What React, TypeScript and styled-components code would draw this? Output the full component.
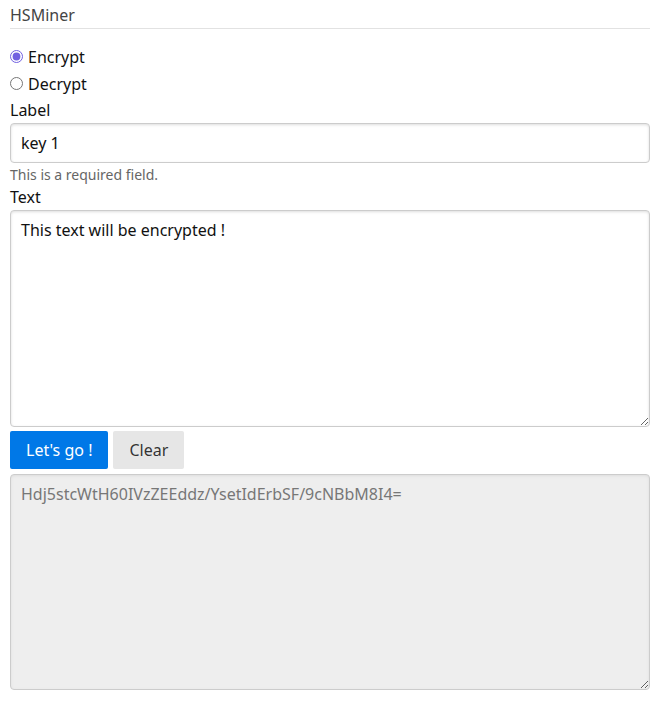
import React, { useState } from "react";
import styled, { createGlobalStyle } from "styled-components";

const Global = createGlobalStyle`
  html, body { margin: 0; padding: 0; background: #fff; }
  body { font-family: "Noto Sans", "Open Sans", sans-serif; font-size: 16px; color: #222; }
  * { box-sizing: border-box; }
`;

const Page = styled.div`
  padding: 0 13px 0 10px;
  display: flex;
  flex-direction: column;
`;

const Header = styled.header`
  padding: 4px 0 2px;
  line-height: 22px;
  color: #444;
  border-bottom: 1px solid #e2e2e2;
`;

const Form = styled.form`
  display: flex;
  flex-direction: column;
  margin-top: 14px;
`;

const RadioGroup = styled.div`
  display: flex;
  flex-direction: column;
  margin-bottom: 1px;
`;

const RadioRow = styled.label`
  display: flex;
  align-items: center;
  height: 27px;
  gap: 4px;
  color: #111;
`;

const Radio = styled.input`
  margin: 0 1px 0 0;
  width: 13px;
  height: 13px;
  accent-color: #7160e0;
`;

const FieldLabel = styled.label`
  line-height: 24px;
  margin-bottom: 1px;
  color: #111;
`;

const TextInput = styled.input`
  height: 40px;
  padding: 8px 10px;
  font: inherit;
  color: #111;
  border: 1px solid #ccc;
  border-radius: 4px;
  box-shadow: inset 0 1px 3px #ddd;
  outline: none;
`;

const Hint = styled.span`
  font-size: 14px;
  line-height: 20px;
  margin-top: 2px;
  color: #666;
`;

const Area = styled.textarea<{ $readonly?: boolean }>`
  font: inherit;
  line-height: 22px;
  padding: 8px 10px;
  border: 1px solid #ccc;
  border-radius: 4px;
  box-shadow: inset 0 1px 3px #ddd;
  outline: none;
  resize: vertical;
  background: ${(p) => (p.$readonly ? "#eeeeee" : "#fff")};
  color: ${(p) => (p.$readonly ? "#777" : "#111")};
`;

const Actions = styled.div`
  display: flex;
  gap: 5px;
  margin: 4px 0 5px;
`;

const Button = styled.button<{ $primary?: boolean }>`
  font: inherit;
  line-height: 22px;
  padding: 8px 16px;
  border: none;
  border-radius: 2px;
  cursor: pointer;
  background: ${(p) => (p.$primary ? "#0078e7" : "#e6e6e6")};
  color: ${(p) => (p.$primary ? "#fff" : "rgba(0,0,0,0.8)")};
`;

export default function App() {
  const [mode, setMode] = useState("encrypt");
  return (
    <>
      <Global />
      <Page>
        <Header>HSMiner</Header>
        <Form onSubmit={(e) => e.preventDefault()}>
          <RadioGroup>
            <RadioRow>
              <Radio type="radio" name="mode" checked={mode === "encrypt"} onChange={() => setMode("encrypt")} />
              Encrypt
            </RadioRow>
            <RadioRow>
              <Radio type="radio" name="mode" checked={mode === "decrypt"} onChange={() => setMode("decrypt")} />
              Decrypt
            </RadioRow>
          </RadioGroup>
          <FieldLabel>Label</FieldLabel>
          <TextInput defaultValue="key 1" />
          <Hint>This is a required field.</Hint>
          <FieldLabel>Text</FieldLabel>
          <Area style={{ height: 217 }} defaultValue="This text will be encrypted !" />
          <Actions>
            <Button $primary type="submit">Let's go !</Button>
            <Button type="button">Clear</Button>
          </Actions>
          <Area $readonly readOnly style={{ height: 216 }} value="Hdj5stcWtH60IVzZEEddz/YsetIdErbSF/9cNBbM8I4=" />
        </Form>
      </Page>
    </>
  );
}
